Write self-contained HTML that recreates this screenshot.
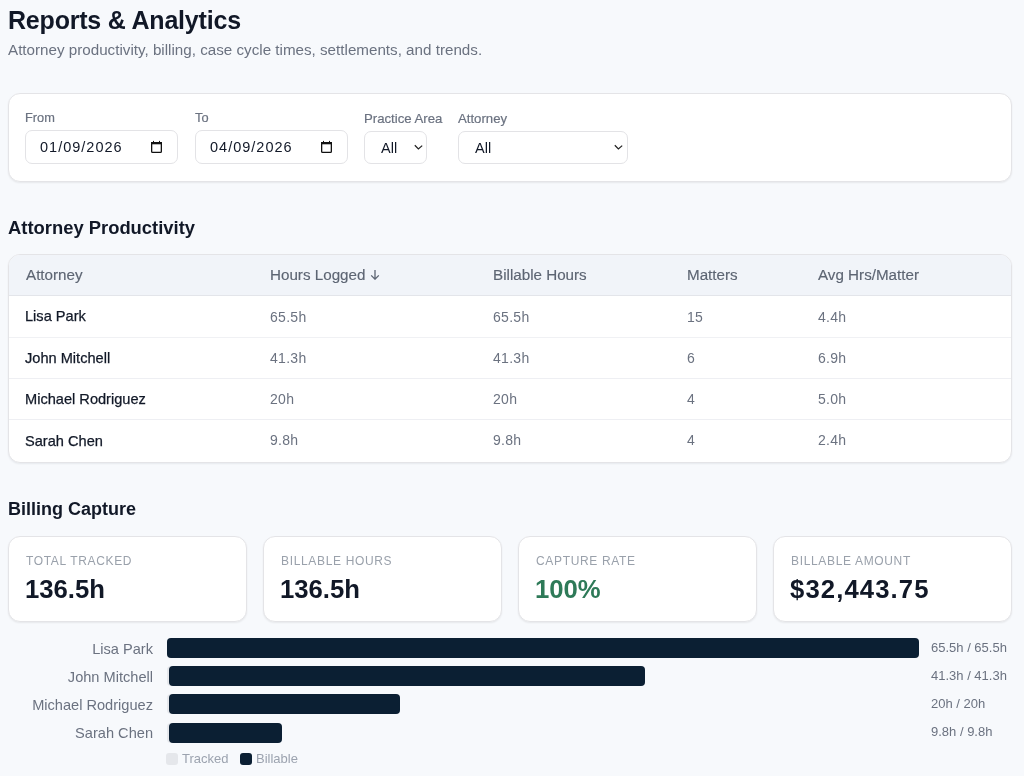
<!DOCTYPE html>
<html><head><meta charset="utf-8">
<style>
*{box-sizing:border-box;margin:0;padding:0}
html,body{width:1024px;height:776px;overflow:hidden;background:#f7f9fc;font-family:"Liberation Sans",sans-serif;color:#111827}
.abs{position:absolute}
.t{position:absolute;white-space:nowrap;line-height:1}
h1{position:absolute;left:8px;top:8px;font-size:25px;letter-spacing:-0.2px;font-weight:700;line-height:1;color:#111827;white-space:nowrap}
.sub{left:8px;top:42px;font-size:15.2px;color:#6b7280}
.card{position:absolute;background:#fff;border:1px solid #e4e4e7;border-radius:12px;box-shadow:0 1px 2px rgba(0,0,0,.07)}
.lbl{font-size:12.8px;color:#6b7280;-webkit-text-stroke:0.2px #6b7280}
.inp{position:absolute;border:1px solid #e3e3e6;border-radius:7px;background:#fff}
.inp .v{position:absolute;white-space:nowrap;line-height:1;font-size:14.5px;color:#111827}
.h2{font-size:18px;font-weight:700;color:#111827}
.th{font-size:15.2px;color:#5d6573;-webkit-text-stroke:0.15px #5d6573}
.nm{font-size:14.6px;color:#111827;-webkit-text-stroke:0.25px #111827}
.val{font-size:14px;color:#6b7280;letter-spacing:0.3px}
.klbl{font-size:12px;color:#9aa1ab;letter-spacing:0.055em}
.kval{font-size:25.7px;font-weight:700;color:#111827}
.blbl{font-size:14.6px;color:#6b7280;text-align:right}
.bval{font-size:13px;color:#6b7280}
.bar{position:absolute;height:20px;border-radius:4px}
.trk{background:#e6e8ec}
.bil{background:#0b1f33}
</style></head><body>
<div id="wrap" style="position:absolute;left:0;top:0;width:1024px;height:776px;will-change:transform">
<h1>Reports &amp; Analytics</h1>
<div class="t sub">Attorney productivity, billing, case cycle times, settlements, and trends.</div>

<!-- Filters -->
<div class="card" style="left:8px;top:93px;width:1004px;height:89px"></div>
<div class="t lbl" style="left:25px;top:112px">From</div>
<div class="inp" style="left:25px;top:130px;width:153px;height:34px">
  <div class="v" style="left:14px;top:9px;letter-spacing:1px">01/09/2026</div>
  <svg class="abs" style="left:125px;top:9px" width="11" height="13" viewBox="0 0 11 13"><rect x="0.65" y="2.6" width="9.7" height="9.7" rx="0.9" fill="none" stroke="#111" stroke-width="1.3"/><rect x="0" y="2" width="11" height="2.3" fill="#111"/><rect x="2" y="0.9" width="1" height="1.4" fill="#111"/><rect x="8" y="0.9" width="1" height="1.4" fill="#111"/></svg>
</div>
<div class="t lbl" style="left:195px;top:112px">To</div>
<div class="inp" style="left:195px;top:130px;width:153px;height:34px">
  <div class="v" style="left:14px;top:9px;letter-spacing:1px">04/09/2026</div>
  <svg class="abs" style="left:125px;top:9px" width="11" height="13" viewBox="0 0 11 13"><rect x="0.65" y="2.6" width="9.7" height="9.7" rx="0.9" fill="none" stroke="#111" stroke-width="1.3"/><rect x="0" y="2" width="11" height="2.3" fill="#111"/><rect x="2" y="0.9" width="1" height="1.4" fill="#111"/><rect x="8" y="0.9" width="1" height="1.4" fill="#111"/></svg>
</div>
<div class="t lbl" style="left:364px;top:112px;font-size:13.2px">Practice Area</div>
<div class="inp" style="left:364px;top:131px;width:63px;height:33px">
  <div class="v" style="left:16px;top:8.6px">All</div>
  <svg class="abs" style="left:49px;top:12px" width="10" height="7" viewBox="0 0 10 7"><path d="M0.8 1.2 L4.4 4.9 L8.2 1.6" fill="none" stroke="#222" stroke-width="1.25"/></svg>
</div>
<div class="t lbl" style="left:458px;top:112px;font-size:13.2px">Attorney</div>
<div class="inp" style="left:458px;top:131px;width:170px;height:33px">
  <div class="v" style="left:16px;top:8.6px">All</div>
  <svg class="abs" style="left:155px;top:12px" width="10" height="7" viewBox="0 0 10 7"><path d="M0.8 1.2 L4.4 4.9 L8.2 1.6" fill="none" stroke="#222" stroke-width="1.25"/></svg>
</div>

<!-- Attorney Productivity -->
<div class="t h2" style="left:8px;top:219px;font-size:18.4px">Attorney Productivity</div>
<div class="card" style="left:8px;top:254px;width:1004px;height:209px;overflow:hidden;box-shadow:0 1px 2px rgba(16,24,40,.07)">
  <div class="abs" style="left:0;top:0;width:1002px;height:40px;background:#f1f4f9;border-bottom:1px solid #e3e5ea;height:41px"></div>
  <div class="abs" style="left:0;top:82px;width:1002px;height:1px;background:#f0f1f4"></div>
  <div class="abs" style="left:0;top:123px;width:1002px;height:1px;background:#eeeff3"></div>
  <div class="abs" style="left:0;top:164px;width:1002px;height:1px;background:#eeeff3"></div>
</div>
<div id="tbl">
  <div class="t th" style="left:26px;top:267px">Attorney</div>
  <div class="t th" style="left:270px;top:267px">Hours Logged <svg style="vertical-align:baseline" width="10" height="10" viewBox="0 0 10 10"><path d="M5 0 V9.2 M1.2 5.4 L5 9.2 L8.8 5.4" fill="none" stroke="#5d6573" stroke-width="1.3"/></svg></div>
  <div class="t th" style="left:493px;top:267px">Billable Hours</div>
  <div class="t th" style="left:687px;top:267px">Matters</div>
  <div class="t th" style="left:818px;top:267px">Avg Hrs/Matter</div>

  <div class="t nm" style="left:25px;top:309px">Lisa Park</div>
  <div class="t val" style="left:270px;top:309.5px">65.5h</div>
  <div class="t val" style="left:493px;top:309.5px">65.5h</div>
  <div class="t val" style="left:687px;top:309.5px">15</div>
  <div class="t val" style="left:818px;top:309.5px">4.4h</div>

  <div class="t nm" style="left:25px;top:351px">John Mitchell</div>
  <div class="t val" style="left:270px;top:350.5px">41.3h</div>
  <div class="t val" style="left:493px;top:350.5px">41.3h</div>
  <div class="t val" style="left:687px;top:350.5px">6</div>
  <div class="t val" style="left:818px;top:350.5px">6.9h</div>

  <div class="t nm" style="left:25px;top:392px">Michael Rodriguez</div>
  <div class="t val" style="left:270px;top:391.5px">20h</div>
  <div class="t val" style="left:493px;top:391.5px">20h</div>
  <div class="t val" style="left:687px;top:391.5px">4</div>
  <div class="t val" style="left:818px;top:391.5px">5.0h</div>

  <div class="t nm" style="left:25px;top:434px">Sarah Chen</div>
  <div class="t val" style="left:270px;top:432.5px">9.8h</div>
  <div class="t val" style="left:493px;top:432.5px">9.8h</div>
  <div class="t val" style="left:687px;top:432.5px">4</div>
  <div class="t val" style="left:818px;top:432.5px">2.4h</div>
</div>

<!-- Billing Capture -->
<div class="t h2" style="left:8px;top:500px">Billing Capture</div>
<div class="card" style="left:8px;top:536px;width:239px;height:86px"></div>
<div class="card" style="left:263px;top:536px;width:239px;height:86px"></div>
<div class="card" style="left:518px;top:536px;width:239px;height:86px"></div>
<div class="card" style="left:773px;top:536px;width:239px;height:86px"></div>
<div class="t klbl" style="left:26px;top:555px">TOTAL TRACKED</div>
<div class="t kval" style="left:25px;top:577px">136.5h</div>
<div class="t klbl" style="left:281px;top:555px">BILLABLE HOURS</div>
<div class="t kval" style="left:280px;top:577px">136.5h</div>
<div class="t klbl" style="left:536px;top:555px">CAPTURE RATE</div>
<div class="t kval" style="left:535px;top:576.5px;color:#2e7a58">100%</div>
<div class="t klbl" style="left:791px;top:555px">BILLABLE AMOUNT</div>
<div class="t kval" style="left:790px;top:577px;letter-spacing:1.1px">$32,443.75</div>

<!-- Bars -->
<div class="t blbl" style="left:0;width:153px;top:641.6px">Lisa Park</div>
<div class="t blbl" style="left:0;width:153px;top:669.6px">John Mitchell</div>
<div class="t blbl" style="left:0;width:153px;top:697.6px">Michael Rodriguez</div>
<div class="t blbl" style="left:0;width:153px;top:725.6px">Sarah Chen</div>

<div class="bar trk" style="left:167px;top:638px;width:752px"></div>
<div class="bar bil" style="left:167px;top:638px;width:752px"></div>
<div class="bar trk" style="left:167px;top:666px;width:478px"></div>
<div class="bar bil" style="left:169px;top:666px;width:476px"></div>
<div class="bar trk" style="left:167px;top:694.4px;width:233px"></div>
<div class="bar bil" style="left:169px;top:694.4px;width:231px"></div>
<div class="bar trk" style="left:167px;top:723px;width:115px"></div>
<div class="bar bil" style="left:169px;top:723px;width:113px"></div>

<div class="t bval" style="left:931px;top:641px">65.5h / 65.5h</div>
<div class="t bval" style="left:931px;top:669px">41.3h / 41.3h</div>
<div class="t bval" style="left:931px;top:697px">20h / 20h</div>
<div class="t bval" style="left:931px;top:725px">9.8h / 9.8h</div>

<div class="abs" style="left:166px;top:753px;width:11.5px;height:11.5px;border-radius:3px;background:#e5e7eb"></div>
<div class="t bval" style="left:182px;top:752px;color:#9ca3af;font-size:13px">Tracked</div>
<div class="abs" style="left:240px;top:753px;width:11.5px;height:11.5px;border-radius:3px;background:#0b1f33"></div>
<div class="t bval" style="left:256px;top:752px;color:#9ca3af;font-size:13px">Billable</div>
</div>
</body></html>
